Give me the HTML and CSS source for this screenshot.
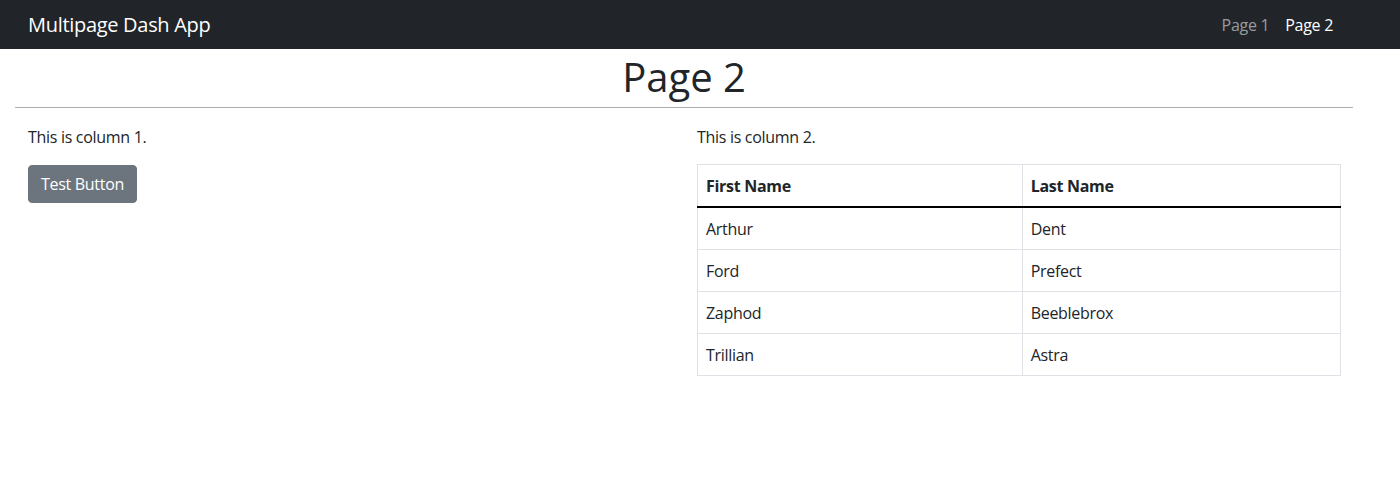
FILE: index.html
```html
<!DOCTYPE html>
<html lang="en">
<head>
<meta charset="utf-8">
<title>Multipage Dash App</title>
<link rel="stylesheet" href="styles.css">
</head>
<body>
<nav class="navbar">
  <a class="brand" href="#">Multipage Dash App</a>
  <div class="nav-links">
    <a class="nav-link" href="#">Page 1</a>
    <a class="nav-link active" href="#">Page 2</a>
  </div>
</nav>
<main class="container">
  <h1 class="title">Page 2</h1>
  <hr class="divider">
  <div class="row">
    <div class="col">
      <p class="text">This is column 1.</p>
      <button class="btn">Test Button</button>
    </div>
    <div class="col">
      <p class="text">This is column 2.</p>
      <table class="table">
        <thead>
          <tr><th class="c1">First Name</th><th>Last Name</th></tr>
        </thead>
        <tbody>
          <tr><td>Arthur</td><td>Dent</td></tr>
          <tr><td>Ford</td><td>Prefect</td></tr>
          <tr><td>Zaphod</td><td>Beeblebrox</td></tr>
          <tr><td>Trillian</td><td>Astra</td></tr>
        </tbody>
      </table>
    </div>
  </div>
</main>
</body>
</html>
```
FILE: styles.css
```css
* { box-sizing: border-box; }
html, body { margin: 0; padding: 0; }
body {
  font-family: "Open Sans", "Noto Sans", sans-serif;
  font-size: 16px;
  line-height: 24px;
  letter-spacing: -0.3px;
  color: #212529;
  background: #fff;
}
.navbar {
  height: 49px;
  background: #212529;
  display: flex;
  align-items: center;
  justify-content: space-between;
  padding: 0 59px 0 28px;
}
.brand {
  color: #fff;
  text-decoration: none;
  font-size: 20px;
  line-height: 30px;
}
.nav-links { display: flex; }
.nav-link {
  color: rgba(255,255,255,0.55);
  text-decoration: none;
  padding: 0 8px;
  font-size: 16px;
}
.nav-link.active { color: #fff; }
.container {
  margin: 0 47px 0 15px;
}
.title {
  text-align: center;
  font-size: 40px;
  line-height: 48px;
  font-weight: 500;
  letter-spacing: 0;
  margin: 4px 0 0;
}
.divider {
  border: 0;
  border-top: 1px solid #adadad;
  margin: 6px 0 0;
}
.row { display: flex; }
.col {
  flex: 1 1 0;
  padding: 17px 12px 0 13px;
}
.text { margin: 0 0 16px; }
.btn {
  font-family: inherit;
  font-size: 16px;
  line-height: 24px;
  letter-spacing: -0.3px;
  padding: 6px 12px;
  color: #fff;
  background: #6c757d;
  border: 1px solid #6c757d;
  border-radius: 4px;
}
.table {
  width: 100%;
  border-collapse: collapse;
  border: 1px solid #dee2e6;
  margin-top: -1px;
}
.table th, .table td {
  text-align: left;
  padding: 9px 8px 8px;
  border: 1px solid #dee2e6;
  line-height: 24px;
}
.table th { font-weight: 700; padding-bottom: 8px; }
.table th.c1 { width: 50.5%; }
.table thead th { border-bottom: 2px solid #000; }
```
